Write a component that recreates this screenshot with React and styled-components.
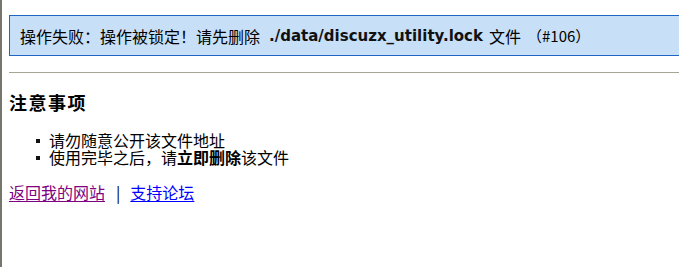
import React from "react";
import styled, { createGlobalStyle } from "styled-components";

const GlobalStyle = createGlobalStyle`
  html, body {
    margin: 0;
    padding: 0;
    background: #ffffff;
    overflow: hidden;
  }
  body {
    font-family: "Noto Sans CJK SC", "DejaVu Sans", sans-serif;
    font-size: 16px;
    color: #000000;
  }
`;

const Page = styled.div`
  display: flex;
  flex-direction: column;
  min-height: 267px;
  border-left: 2px solid #76766c;
  padding-left: 7px;
  box-sizing: border-box;
`;

const Alert = styled.div`
  display: flex;
  align-items: center;
  margin-top: 15px;
  margin-right: -20px;
  height: 41px;
  box-sizing: border-box;
  padding-left: 10px;
  background: #c7dff7;
  border: 1px solid #1f65c4;
  border-right: none;
  font-size: 16px;
  white-space: nowrap;
`;

const Path = styled.b`
  font-family: "DejaVu Sans", Verdana, sans-serif;
  font-size: 15px;
  font-weight: bold;
  color: #111111;
  margin: 0 6px 0 9px;
`;

const Code = styled.span`
  margin-left: 6px;
  font-size: 15px;
`;

const Rule = styled.hr`
  margin: 16px -20px 0 0;
  border: none;
  height: 1px;
  background: #a6a596;
`;

const Title = styled.h3`
  margin: 19px 0 0;
  font-size: 18px;
  line-height: 20px;
  font-weight: bold;
  letter-spacing: 1.5px;
`;

const List = styled.ul`
  list-style: none;
  margin: 20px 0 0;
  padding: 0 0 0 40px;
`;

const Item = styled.li`
  position: relative;
  line-height: 17px;
  height: 17px;
  &::before {
    content: "";
    position: absolute;
    left: -13px;
    top: 7px;
    width: 4px;
    height: 4px;
    background: #111111;
  }
`;

const Links = styled.div`
  display: flex;
  align-items: center;
  margin-top: 18px;
  line-height: 16px;
`;

const Link = styled.a`
  color: ${(props) => (props.$visited ? "#800080" : "#0000ff")};
  text-decoration: underline;
  text-underline-offset: 2px;
`;

const Sep = styled.span`
  margin: 0 10px 0 11px;
`;

export default function App() {
  return (
    <>
      <GlobalStyle />
      <Page>
        <Alert>
          操作失败：操作被锁定！请先删除
          <Path>./data/discuzx_utility.lock</Path>
          文件
          <Code>（#106）</Code>
        </Alert>
        <Rule />
        <Title>注意事项</Title>
        <List>
          <Item>请勿随意公开该文件地址</Item>
          <Item>
            使用完毕之后，请<b>立即删除</b>该文件
          </Item>
        </List>
        <Links>
          <Link href="#" $visited>
            返回我的网站
          </Link>
          <Sep>|</Sep>
          <Link href="#">支持论坛</Link>
        </Links>
      </Page>
    </>
  );
}
